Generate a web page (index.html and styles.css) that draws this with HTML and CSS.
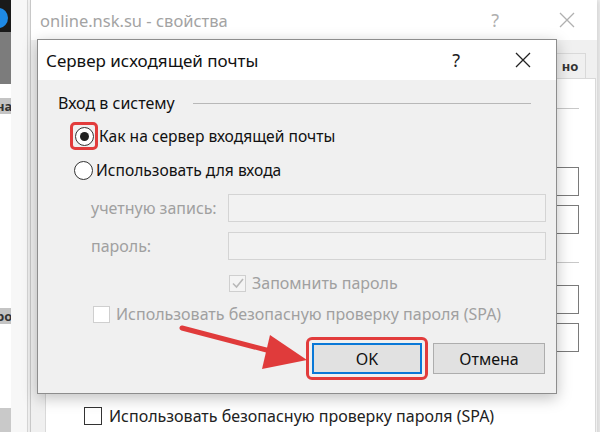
FILE: index.html
```html
<!DOCTYPE html>
<html lang="ru">
<head>
  <meta charset="UTF-8">
  <title>Сервер исходящей почты</title>
  <link rel="stylesheet" href="styles.css">
</head>
<body>
<div class="desk">

  <!-- окно слева, за свойствами -->
  <div class="far">
    <div class="far-top"><span class="far-icon"></span></div>
    <div class="far-gray"></div>
    <div class="far-label">на</div>
    <div class="far-space"></div>
    <div class="far-label">ро</div>
    <div class="far-space2"></div>
    <div class="far-foot"></div>
  </div>
  <div class="far-edge"></div>

  <!-- окно свойств учетной записи -->
  <div class="back">
    <div class="back-title">
      <span class="back-name">online.nsk.su - свойства</span>
      <span class="back-help">?</span>
      <svg class="back-close" width="16" height="16" viewBox="0 0 16 16"><path d="M1 1L15 15M15 1L1 15" stroke="#b0b0b0" stroke-width="1.3"/></svg>
    </div>
    <div class="back-body">
      <div class="tabs"><div class="tab">но</div></div>
      <div class="panel">
        <div class="pline first"></div>
        <div class="pbox b1"></div>
        <div class="pbox"></div>
        <div class="pline"></div>
        <div class="pbox b3"></div>
        <div class="pbox"></div>
        <label class="pcheck"><span class="box"></span>Использовать безопасную проверку пароля (SPA)</label>
      </div>
    </div>
  </div>

  <!-- диалог -->
  <div class="dlg">
    <div class="dlg-title">
      <span class="dlg-name">Сервер исходящей почты</span>
      <span class="dlg-help">?</span>
      <svg class="dlg-close" width="16" height="16" viewBox="0 0 16 16"><path d="M1 1L15 15M15 1L1 15" stroke="#222" stroke-width="1.3"/></svg>
    </div>
    <div class="dlg-body">
      <div class="group">
        <span>Вход в систему</span>
        <div class="group-line"></div>
      </div>

      <label class="radio-row r1">
        <span class="mark"><span class="radio checked"></span></span>
        Как на сервер входящей почты
      </label>
      <label class="radio-row r2">
        <span class="radio"></span>
        Использовать для входа
      </label>

      <div class="fields">
        <span class="flabel">учетную запись:</span>
        <span class="input"></span>
        <span class="flabel">пароль:</span>
        <span class="input"></span>
        <span></span>
        <label class="check-row remember"><span class="cbox on">
          <svg width="14" height="14" viewBox="0 0 14 14"><path d="M2 7.5L5.5 11L12 3" fill="none" stroke="#b8b8b8" stroke-width="1.6"/></svg>
        </span>Запомнить пароль</label>
      </div>

      <label class="check-row spa"><span class="cbox"></span>Использовать безопасную проверку пароля (SPA)</label>

      <div class="buttons">
        <div class="mark-btn"><button class="btn ok">OK</button></div>
        <button class="btn">Отмена</button>
      </div>
    </div>
  </div>

  <svg class="arrow" width="600" height="432" viewBox="0 0 600 432">
    <path d="M182 328L274 352" stroke="#e03b3b" stroke-width="5" stroke-linecap="round"/>
    <path d="M307 360L262 369L270 335Z" fill="#e03b3b"/>
  </svg>
</div>
</body>
</html>
```

FILE: styles.css
```css
body { margin: 0; font-family: "Noto Sans", "Open Sans", sans-serif; }
.desk { position: relative; width: 600px; height: 432px; overflow: hidden; background: #f3f3f3; }

/* окно слева */
.far { position: absolute; left: 0; top: 0; width: 11px; height: 432px; display: flex; flex-direction: column; background: #fff; }
.far-top { height: 32px; background: #1a1a1a; position: relative; }
.far-icon { position: absolute; left: -10px; top: 8px; width: 18px; height: 20px; border-radius: 50%; background: #1e8ae6; }
.far-gray { height: 52px; background: #7c7c7c; }
.far-label { height: 16px; margin-top: 14px; background: #c4c4c4; font-size: 13px; font-weight: bold; line-height: 16px; color: #333; text-indent: -4px; overflow: hidden; }
.far-space { height: 180px; }
.far-space2 { height: 84px; }
.far-foot { flex: 1; background: #c9c9c9; }
.far-edge { position: absolute; left: 11px; top: 0; width: 16px; height: 432px; background: #f7f7f7; border-right: 1px solid #d6d6d6; }

/* окно свойств */
.back { position: absolute; left: 30px; top: 0; width: 566px; height: 460px; background: #f0f0f0; border-left: 1px solid #c8c8c8; box-shadow: 2px 0 6px rgba(0,0,0,0.15); }
.back-title { height: 40px; background: #fff; display: flex; align-items: center; padding-left: 9px; }
.back-name { font-size: 16.5px; color: #a3a3a3; flex: 1; }
.back-help { font-size: 18px; color: #b0b0b0; margin-right: 60px; }
.back-close { margin-right: 22px; }
.back-body { padding: 13px 0 0 14px; }
.tabs { display: flex; justify-content: flex-end; padding-right: 11px; }
.tab { width: 30px; height: 24px; background: #f0f0f0; border: 1px solid #d9d9d9; border-bottom: none; font-size: 13px; font-weight: bold; color: #333; line-height: 24px; text-align: center; }
.panel { background: #fff; border: 1px solid #d9d9d9; margin-right: 1px; height: 400px; display: flex; flex-direction: column; align-items: flex-end; padding-right: 16px; }
.pline { width: 200px; height: 1px; background: #c8c8c8; margin-top: 28px; }
.pline.first { margin-top: 29px; }
.pbox { width: 200px; height: 27px; border: 1px solid #7a7a7a; background: #fff; margin-top: 9px; }
.pbox.b1 { margin-top: 58px; }
.pbox.b3 { margin-top: 22px; }
.pcheck { align-self: flex-start; margin-left: 38px; margin-top: 53px; display: flex; align-items: center; gap: 7px; font-size: 16px; color: #222; }
.pcheck .box { width: 16px; height: 16px; border: 1px solid #333; background: #fff; }

/* диалог */
.dlg { position: absolute; left: 37px; top: 39px; width: 518px; height: 353px; background: #f0f0f0; border: 1px solid #8d8d8d; box-shadow: 0 4px 14px rgba(0,0,0,0.25); display: flex; flex-direction: column; }
.dlg-title { height: 40px; background: #fff; display: flex; align-items: center; padding-left: 8px; }
.dlg-name { font-size: 17px; color: #111; flex: 1; }
.dlg-help { font-size: 18px; color: #222; margin-right: 55px; }
.dlg-close { margin-right: 25px; }
.dlg-body { padding: 13px 11px 0 20px; font-size: 16px; color: #111; }

.group { display: flex; align-items: center; height: 20px; }
.group-line { flex: 1; height: 1px; background: #b8b8b8; margin-left: 18px; margin-right: 14px; }

.radio-row { display: flex; align-items: center; height: 28px; font-size: 15.6px; }
.radio-row.r1 { margin-top: 9px; margin-left: 12px; }
.radio-row.r2 { margin-top: 6px; margin-left: 16px; }
.mark { display: inline-flex; align-items: center; justify-content: center; width: 22px; height: 22px; border: 3px solid #e23c3c; border-radius: 5px; margin-right: 1px; }
.radio { width: 19px; height: 19px; box-sizing: border-box; border: 1px solid #333; border-radius: 50%; background: #fff; margin-right: 3px; position: relative; }
.mark .radio { margin-right: 0; }
.radio.checked::after { content: ""; position: absolute; left: 4px; top: 4px; width: 9px; height: 9px; border-radius: 50%; background: #222; }

.fields { display: grid; grid-template-columns: 137px 318px; row-gap: 10px; align-items: center; margin-top: 10px; margin-left: 33px; }
.flabel { color: #a0a0a0; font-size: 16px; }
.input { height: 26px; border: 1px solid #d4d4d4; background: #f2f2f2; }
.check-row { display: flex; align-items: center; gap: 6px; color: #a0a0a0; }
.remember { margin-left: 1px; margin-top: 2px; }
.cbox { width: 15px; height: 15px; border: 1px solid #cfcfcf; background: #fff; display: inline-flex; align-items: center; justify-content: center; }
.cbox.on { background: #f4f4f4; }
.spa { margin-top: 9px; margin-left: 35px; }

.buttons { display: flex; align-items: center; justify-content: flex-end; margin-top: 12px; gap: 5px; }
.mark-btn { border: 3px solid #e23c3c; border-radius: 6px; padding: 3px; display: flex; }
.btn { width: 112px; height: 31px; background: #e1e1e1; border: 1px solid #adadad; font-family: inherit; font-size: 16px; color: #111; padding: 0; }
.btn.ok { width: 110px; height: 31px; border: 2px solid #0a78d7; }

.arrow { position: absolute; left: 0; top: 0; }
```
